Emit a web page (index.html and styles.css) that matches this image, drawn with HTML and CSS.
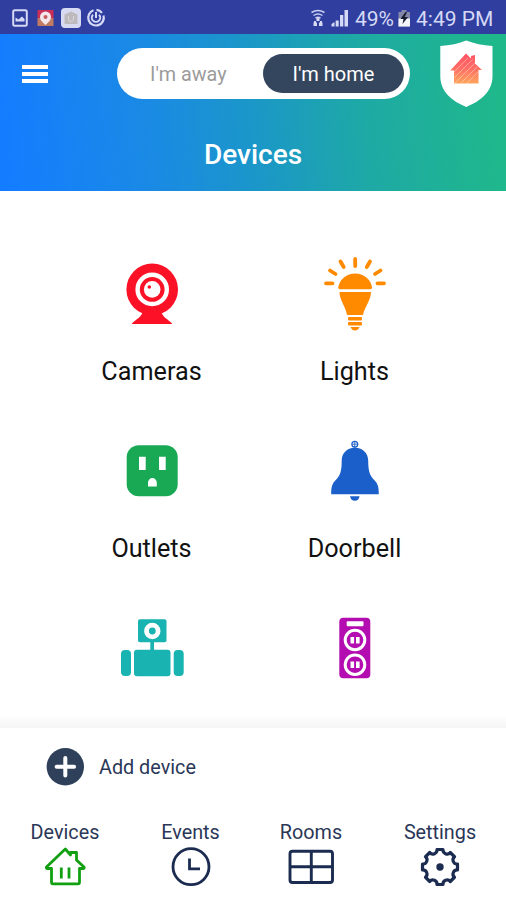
FILE: index.html
```html
<!DOCTYPE html>
<html lang="en">
<head>
<meta charset="utf-8">
<title>Devices</title>
<link rel="stylesheet" href="styles.css">
</head>
<body>
<div class="app">
  <div class="status">
    <svg class="status-left" viewBox="0 0 120 34" width="120" height="34">
      <rect x="13.200" y="10.200" width="13.600" height="15.600" rx="1.500" fill="none" stroke="#d5d9f5" stroke-width="2"/>
      <path d="M15.500 21.500v-4l3 2 3.500-3 2.500 2.500v2.500z" fill="#d5d9f5"/>
      <rect x="37.500" y="10" width="16" height="8" fill="#c92f57"/>
      <rect x="37.500" y="18" width="16" height="8" fill="#c17a62"/>
      <path d="M45.500 25c-3-3-5.500-4.500-5.500-8a5.500 5.500 0 0 1 11 0c0 3.500-2.500 5-5.500 8z" fill="#f4e6ea"/>
      <circle cx="45.500" cy="17" r="2" fill="#c55b5b"/>
      <rect x="61" y="8" width="20" height="20" rx="4" fill="#d8daf2"/>
      <path d="M64.500 14.500l6.500-3 6.500 3V24h-13z" fill="#bdb9bd"/>
      <path d="M68.500 16v3a2.500 2.500 0 0 0 5 0v-3" fill="none" stroke="#d8d6da" stroke-width="1"/>
      <path d="M93.500 10.300A7.800 7.800 0 1 0 103.500 15.500" fill="none" stroke="#d5d9f5" stroke-width="2.200"/>
      <path d="M96.500 9.800a7.800 7.800 0 0 1 5.500 3" fill="none" stroke="#d5d9f5" stroke-width="2.200"/>
      <path d="M93 14.700a4.200 4.200 0 1 0 6 0M96 12v6" fill="none" stroke="#d5d9f5" stroke-width="2"/>
    </svg>
    <div class="status-right">
      <svg viewBox="309 0 42 34" width="42" height="34">
        <g fill="none" stroke="#c9cef0" stroke-width="1.500">
          <path d="M311.500 12.500q6.500-4 13 0M313.500 15.500q4.500-3 9 0M315.500 18q2.500-1.500 5 0"/>
        </g>
        <path d="M316.500 18h3v3h-3zM313.500 22.500h3.500v3.500h-3.500zM319 22.500h3.500v3.500H319zM314 21h2v2h-2zM320 21h2v2h-2z" fill="#d5d9f5"/>
        <path d="M331.500 26.500v-2.500l3-2v4.500zM335.700 26.500v-6h3v6zM340 26.500V15h3.300v11.500zM344.500 26.500V10h3.500v16.500z" fill="#d5d9f5"/>
      </svg>
      <span class="pct">49%</span>
      <svg class="batt" viewBox="397 0 14 34" width="14" height="34">
        <path d="M398.500 12h3v-2h5v2h3.500v14.500h-11.500z" fill="#8388aa"/>
        <path d="M398.500 18.500h11.500v8h-11.500z" fill="#f2f4fa"/>
        <path d="M405.500 12l-5 7h3l-1 5 5.500-7h-3.500l2.500-4.500z" fill="#151a2c"/>
      </svg>
      <span class="time">4:49 PM</span>
    </div>
  </div>

  <header class="header">
    <div class="bar">
      <div class="menu"><i></i><i></i><i></i></div>
      <div class="toggle">
        <span class="away">I'm away</span>
        <span class="home">I'm home</span>
      </div>
      <svg class="shield" viewBox="439 39 55 69" width="55" height="69">
        <defs>
          <linearGradient id="hg" x1="0" y1="0" x2="0" y2="1"><stop offset="0" stop-color="#ff5364"/><stop offset=".5" stop-color="#ff6f66"/><stop offset="1" stop-color="#ffa55c"/></linearGradient>
        </defs>
        <path d="M466.300 40.500C459 43.500 450 45.500 440.300 46v30C440.300 92 452 101 466.300 107 480.500 101 492.500 92 492.500 76V46C483 45.500 474 43.500 466.300 40.500z" fill="#fff"/>
        <path d="M466 53.500l5 5v-2.500l4-1v8.500l7 6.500h-3.500v13.500h-24.500V70.500h-3.800z" fill="url(#hg)"/>
        <path d="M453 73l15-15M454 78l19-19M455 83l20-20M461 83l16-16M467 83l12-12" stroke="#fff" stroke-opacity=".35" stroke-width="1" fill="none"/>
      </svg>
    </div>
    <h1>Devices</h1>
  </header>

  <main class="grid">
    <div class="cell">
      <svg viewBox="112 254 80 80" width="80" height="80">
        <path d="M143 311C142 317 136 319 131.500 324h41C168 319 162 317 161 311z" fill="#fc1226"/>
        <circle cx="152.200" cy="289.400" r="25.800" fill="#fc1226"/>
        <circle cx="152.200" cy="289.400" r="14.600" fill="none" stroke="#fff" stroke-width="4.400"/>
        <circle cx="152.200" cy="289.400" r="8.300" fill="#fff"/>
        <circle cx="149.300" cy="287" r="1.800" fill="#fc1226"/>
      </svg>
      <span>Cameras</span>
    </div>
    <div class="cell">
      <svg viewBox="315 254 80 80" width="80" height="80">
        <g fill="#ff8a00">
          <path d="M338.300 287.500a17 16 0 0 1 33.700 0q0 1.800-1.500 1.800h-30.700q-1.500 0-1.500-1.800z"/>
          <path d="M339.500 292h31.500c0 8-6 14-8 23h-16c-1.500-9-7.500-15-7.500-23z"/>
          <rect x="348" y="317" width="14" height="3.400" rx="1"/>
          <rect x="348" y="322" width="14" height="3.400" rx="1"/>
          <path d="M350.500 327h9q-1.500 3.500-4.500 3.500t-4.500-3.500z"/>
        </g>
        <path d="M355.200 259v7M340.500 261.500l3.200 5.500M330 270.500l5.500 3.500M326 283.300h6.500M370 261.500l-3.200 5.500M380.500 270.500l-5.500 3.500M377.500 283.300h6.500" stroke="#ff8a00" stroke-width="3.800" stroke-linecap="round"/>
      </svg>
      <span>Lights</span>
    </div>
    <div class="cell">
      <svg viewBox="112 431 80 80" width="80" height="80">
        <rect x="126.700" y="445.300" width="51" height="51" rx="12" fill="#19a955"/>
        <path d="M139 456.700h6.700V470H139zM159 456.700h6.700V470H159zM148 486.500v-4a4.400 4.400 0 0 1 8.800 0v4z" fill="#fff"/>
      </svg>
      <span>Outlets</span>
    </div>
    <div class="cell">
      <svg viewBox="315 431 80 80" width="80" height="80">
        <circle cx="354.800" cy="444.200" r="2.900" fill="#fff" stroke="#1b5fca" stroke-width="1.300"/>
        <path d="M354.800 442v6M352.800 444.200h4" stroke="#1b5fca" stroke-width=".9"/>
        <path d="M354.900 447.800c8.500 0 13.300 6 13.300 13 0 11 2 15.500 6.300 19.500 3 3 4.300 6 4.300 14h-47.600c0-8 1.300-11 4.300-14 4.300-4 6.200-8.500 6.200-19.500 0-7 4.700-13 13.200-13zM350 496.200h9.600q-1 4.500-4.800 4.500t-4.800-4.500z" fill="#1b5fca"/>
      </svg>
      <span>Doorbell</span>
    </div>
    <div class="cell">
      <svg viewBox="112 608 80 80" width="80" height="80">
        <g fill="#19b3b1">
          <rect x="138" y="619.300" width="28.500" height="23" rx="2"/>
          <rect x="150.300" y="641" width="3.700" height="10"/>
          <rect x="134" y="649.700" width="36.500" height="26.500" rx="3"/>
          <rect x="121" y="650" width="10" height="26" rx="4"/>
          <rect x="173.700" y="650" width="10" height="26" rx="4"/>
        </g>
        <circle cx="152.300" cy="631" r="5.800" fill="none" stroke="#fff" stroke-width="4.800"/>
      </svg>
    </div>
    <div class="cell">
      <svg viewBox="315 608 80 80" width="80" height="80">
        <rect x="339.300" y="617.700" width="31" height="60.500" rx="4" fill="#b30cb0"/>
        <rect x="346.700" y="621.200" width="16.800" height="5" rx="1" fill="#fff"/>
        <g fill="none" stroke="#fff" stroke-width="3">
          <circle cx="355" cy="640" r="9.800"/><circle cx="355" cy="664.700" r="9.800"/>
        </g>
        <path d="M350.500 637h3.600v6.500h-3.600zM356 637h3.600v6.500H356zM350.500 661.500h3.600v6.500h-3.600zM356 661.500h3.600v6.500H356z" fill="#fff"/>
      </svg>
    </div>
  </main>

  <div class="fade"></div>

  <footer class="footer">
    <div class="add">
      <svg viewBox="46 747 39 39" width="39" height="39">
        <circle cx="65.300" cy="766.800" r="18.700" fill="#2f405a"/>
        <path d="M65.300 758v17.500M56.600 766.800h17.500" stroke="#fff" stroke-width="4" stroke-linecap="round"/>
      </svg>
      <span>Add device</span>
    </div>
    <nav class="nav">
      <div class="tab">
        <span>Devices</span>
        <svg viewBox="44 845 42 44" width="42" height="44" fill="none" stroke="#12a012" stroke-width="2.800" stroke-linejoin="round" stroke-linecap="round">
          <path d="M65.300 849L46.500 867q-.5 1.500 1 1.500h4v13.500q0 1.800 1.500 1.800h25q1.500 0 1.500-1.800V868.500h4q1 0 .5-1.500l-7.500-7V852.500h-6v2.500z"/>
          <path d="M61.300 867.500v11M69 867.500v11" stroke-linecap="butt"/>
        </svg>
      </div>
      <div class="tab">
        <span>Events</span>
        <svg viewBox="169.500 845 42 44" width="42" height="44" fill="none" stroke="#1b2c50" stroke-width="2.800">
          <circle cx="190.500" cy="866.700" r="18"/>
          <path d="M189 858.500v10.300h10.500"/>
        </svg>
      </div>
      <div class="tab">
        <span>Rooms</span>
        <svg viewBox="288 845 46 44" width="46" height="44" fill="none" stroke="#1b2c50" stroke-width="2.900">
          <rect x="290" y="851.300" width="42.500" height="31.200" rx="2.500"/>
          <path d="M311.300 851v31.500M290 866.800h42.500"/>
        </svg>
      </div>
      <div class="tab">
        <span>Settings</span>
        <svg viewBox="-21 -22 42 44" width="42" height="44" fill="none" stroke="#1b2c50" stroke-width="3.200" stroke-linejoin="round">
          <path d="M-3-17.500H3A4.100 4.100 0 0 0 10.250-14.500L14.500-10.250A4.100 4.100 0 0 0 17.500-3V3A4.100 4.100 0 0 0 14.500 10.250L10.250 14.500A4.100 4.100 0 0 0 3 17.500H-3A4.100 4.100 0 0 0-10.250 14.500L-14.500 10.250A4.100 4.100 0 0 0-17.500 3V-3A4.100 4.100 0 0 0-14.500-10.250L-10.250-14.500A4.100 4.100 0 0 0-3-17.500z"/>
          <circle r="3.700" fill="#1b2c50" stroke="none"/>
        </svg>
      </div>
    </nav>
  </footer>
</div>
</body>
</html>
```
FILE: styles.css
```css
* { box-sizing: border-box; }
body { margin: 0; font-family: Roboto, "Liberation Sans", sans-serif; background: #fff; }
svg { display: block; flex: none; }
span, h1 { white-space: nowrap; }
.app { width: 506px; height: 900px; overflow: hidden; display: flex; flex-direction: column; }

.status { height: 34px; flex: none; background: #303f9f; display: flex; justify-content: space-between; color: #d5d9f5; }
.status-right { display: flex; width: 197px; font-size: 21px; line-height: 38px; }
.pct { width: 46px; padding-left: 4px; }
.batt { width: 14px; }
.time { padding-left: 5px; }

.header { height: 157px; flex: none; background: linear-gradient(84deg, #147dff 2%, #1a8ae4 30%, #1b97c8 50%, #1eaaa4 72%, #1fb88a 98%); }
.bar { display: flex; height: 81px; }
.menu { width: 117px; padding: 31px 0 0 22px; display: flex; flex-direction: column; gap: 3px; }
.menu i { width: 26px; height: 4px; background: #fff; }
.toggle { width: 293px; height: 51px; margin-top: 14px; border-radius: 26px; background: #fff; display: flex; align-items: center; padding: 0 6px 0 33px; justify-content: space-between; }
.away { color: #9b9b9b; font-size: 19.8px; line-height: 24px; padding-top: 2px; }
.home { width: 141px; height: 39px; border-radius: 20px; background: #34455e; color: #fff; font-size: 20px; line-height: 41px; text-align: center; }
.shield { margin: 5px 0 0 29px; }
.header h1 { margin: 23px 0 0; text-align: center; color: #fff; font-size: 28px; line-height: 33px; font-weight: 500; }

.grid { flex: none; height: 526px; padding: 63px 50px 0 50px; display: grid; grid-template-columns: 203px 203px; grid-auto-rows: 177px; overflow: hidden; }
.cell { display: flex; flex-direction: column; align-items: center; color: #111; font-size: 25.2px; line-height: 34px; }
.cell svg { margin-bottom: 21px; }

.fade { height: 11px; flex: none; background: linear-gradient(#fdfdfd, #f5f5f5); }

.footer { flex: 1; background: #fff; color: #2b3757; font-size: 19.8px; }
.add { display: flex; align-items: center; height: 39px; margin: 19px 0 0 46px; gap: 14px; }
.add span { padding-top: 2px; }
.nav { display: grid; grid-template-columns: 130px 121px 120px 138px; margin-top: 33px; }
.tab { display: flex; flex-direction: column; align-items: center; }
.tab span { height: 26px; line-height: 28px; }
```
